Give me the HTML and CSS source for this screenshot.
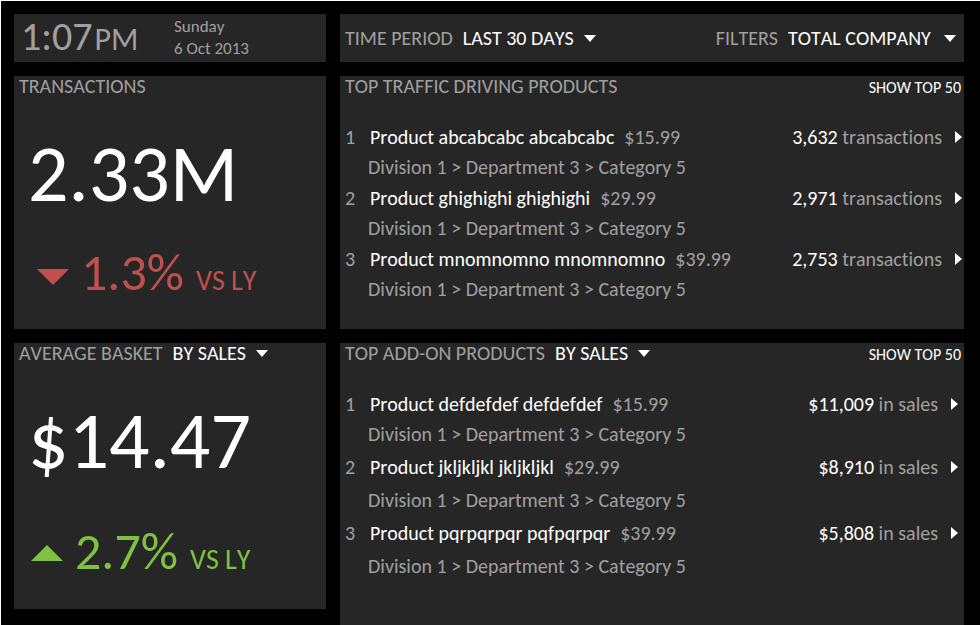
FILE: index.html
```html
<!DOCTYPE html>
<html lang="en">
<head>
<meta charset="utf-8">
<meta name="viewport" content="width=device-width, initial-scale=1">
<title>Retail dashboard</title>
<link rel="stylesheet" href="styles.css">
</head>
<body>
<main class="dashboard">
  <div class="column column-side">
    <header class="panel bar">
      <time class="clock">1:07<span class="meridiem">PM</span></time>
      <div class="date">Sunday<br>6 Oct 2013</div>
    </header>

    <section class="panel metric metric-transactions">
      <h2 class="title">TRANSACTIONS</h2>
      <p class="figure">2.33M</p>
      <p class="change change-down">
        <svg class="trend" viewBox="0 0 32 16" aria-hidden="true"><path d="M0 0H32L16 16Z"/></svg>
        <span class="percent">1.3%</span>
        <span class="versus">VS LY</span>
      </p>
    </section>

    <section class="panel metric metric-basket">
      <div class="heading">
        <label class="title" for="basket-by">AVERAGE BASKET</label>
        <span class="picker">
          <select id="basket-by"><option>BY SALES</option></select>
          <svg class="caret" viewBox="0 0 12 7" aria-hidden="true"><path d="M0 0H12L6 7Z"/></svg>
        </span>
      </div>
      <p class="figure">$14.47</p>
      <p class="change change-up">
        <svg class="trend" viewBox="0 0 32 16" aria-hidden="true"><path d="M0 16H32L16 0Z"/></svg>
        <span class="percent">2.7%</span>
        <span class="versus">VS LY</span>
      </p>
    </section>
  </div>

  <div class="column column-main">
    <div class="panel bar bar-filters">
      <div class="heading">
        <label class="title" for="period">TIME PERIOD</label>
        <span class="picker">
          <select id="period"><option>LAST 30 DAYS</option></select>
          <svg class="caret" viewBox="0 0 12 7" aria-hidden="true"><path d="M0 0H12L6 7Z"/></svg>
        </span>
      </div>
      <div class="heading">
        <label class="title" for="filter">FILTERS</label>
        <span class="picker picker-wide">
          <select id="filter"><option>TOTAL COMPANY</option></select>
          <svg class="caret" viewBox="0 0 12 7" aria-hidden="true"><path d="M0 0H12L6 7Z"/></svg>
        </span>
      </div>
    </div>

    <section class="panel ranking ranking-traffic">
      <div class="panel-head">
        <h2 class="title">TOP TRAFFIC DRIVING PRODUCTS</h2>
        <button class="show-top" type="button">SHOW TOP 50</button>
      </div>
      <ol class="products">
        <li class="product">
          <div class="line"><span class="rank">1</span><span class="name">Product abcabcabc abcabcabc</span><span class="price">$15.99</span><span class="result"><b>3,632</b> transactions</span><button class="open" type="button" aria-label="Open product 1"><svg viewBox="0 0 7 12"><path d="M0 0L7 6L0 12Z"/></svg></button></div>
          <div class="path">Division 1 &gt; Department 3 &gt; Category 5</div>
        </li>
        <li class="product">
          <div class="line"><span class="rank">2</span><span class="name">Product ghighighi ghighighi</span><span class="price">$29.99</span><span class="result"><b>2,971</b> transactions</span><button class="open" type="button" aria-label="Open product 2"><svg viewBox="0 0 7 12"><path d="M0 0L7 6L0 12Z"/></svg></button></div>
          <div class="path">Division 1 &gt; Department 3 &gt; Category 5</div>
        </li>
        <li class="product">
          <div class="line"><span class="rank">3</span><span class="name">Product mnomnomno mnomnomno</span><span class="price">$39.99</span><span class="result"><b>2,753</b> transactions</span><button class="open" type="button" aria-label="Open product 3"><svg viewBox="0 0 7 12"><path d="M0 0L7 6L0 12Z"/></svg></button></div>
          <div class="path">Division 1 &gt; Department 3 &gt; Category 5</div>
        </li>
      </ol>
    </section>

    <section class="panel ranking ranking-addon">
      <div class="panel-head">
        <div class="heading">
          <label class="title" for="addon-by">TOP ADD-ON PRODUCTS</label>
          <span class="picker">
            <select id="addon-by"><option>BY SALES</option></select>
            <svg class="caret" viewBox="0 0 12 7" aria-hidden="true"><path d="M0 0H12L6 7Z"/></svg>
          </span>
        </div>
        <button class="show-top" type="button">SHOW TOP 50</button>
      </div>
      <ol class="products">
        <li class="product">
          <div class="line"><span class="rank">1</span><span class="name">Product defdefdef defdefdef</span><span class="price">$15.99</span><span class="result"><b>$11,009</b> in sales</span><button class="open" type="button" aria-label="Open product 1"><svg viewBox="0 0 7 12"><path d="M0 0L7 6L0 12Z"/></svg></button></div>
          <div class="path">Division 1 &gt; Department 3 &gt; Category 5</div>
        </li>
        <li class="product">
          <div class="line"><span class="rank">2</span><span class="name">Product jkljkljkl jkljkljkl</span><span class="price">$29.99</span><span class="result"><b>$8,910</b> in sales</span><button class="open" type="button" aria-label="Open product 2"><svg viewBox="0 0 7 12"><path d="M0 0L7 6L0 12Z"/></svg></button></div>
          <div class="path">Division 1 &gt; Department 3 &gt; Category 5</div>
        </li>
        <li class="product">
          <div class="line"><span class="rank">3</span><span class="name">Product pqrpqrpqr pqfpqrpqr</span><span class="price">$39.99</span><span class="result"><b>$5,808</b> in sales</span><button class="open" type="button" aria-label="Open product 3"><svg viewBox="0 0 7 12"><path d="M0 0L7 6L0 12Z"/></svg></button></div>
          <div class="path">Division 1 &gt; Department 3 &gt; Category 5</div>
        </li>
      </ol>
    </section>
  </div>
</main>
</body>
</html>
```
FILE: styles.css
```css
* {
  box-sizing: border-box;
}

body {
  margin: 0;
  background: #000;
  color: #a0a0a0;
  font-family: Calibri, Carlito, Lato, sans-serif;
  font-size: 20px;
  font-kerning: none;
  font-variant-ligatures: none;
  line-height: 20px;
}

h2, p, ol {
  margin: 0;
  padding: 0;
}

select, button {
  appearance: none;
  margin: 0;
  padding: 0;
  border: 0;
  background: none;
  color: #fff;
  font: inherit;
  font-kerning: none;
  font-variant-ligatures: none;
  cursor: pointer;
}

.dashboard {
  display: grid;
  grid-template-columns: minmax(0, 1fr) minmax(0, 2fr);
  gap: 14px;
  min-height: 100vh;
  padding: 13px 16px 0 13px;
  border-top: 1px solid #fff;
  border-left: 1px solid #fff;
}

.column {
  display: flex;
  flex-direction: column;
  gap: 14px;
}

.column-side {
  padding-bottom: 16px;
}

.panel {
  background: #262626;
}

.bar {
  display: flex;
  align-items: center;
  height: 48px;
}

.bar-filters {
  justify-content: space-between;
  padding: 0 8px 0 5px;
}

.clock {
  padding-left: 7px;
  width: 160px;
  font-size: 40px;
  line-height: 48px;
}

.meridiem {
  padding-left: 2px;
  font-size: 32px;
}

.date {
  font-size: 17px;
  line-height: 22px;
}

.title {
  font-size: 20px;
  font-weight: 400;
  line-height: 20px;
}

.heading {
  display: flex;
  align-items: center;
  gap: 10px;
}

.picker {
  display: grid;
  align-items: center;
}

.picker select,
.picker .caret {
  grid-area: 1 / 1;
}

.picker select {
  padding-right: 21px;
  line-height: 20px;
}

.picker-wide select {
  padding-right: 25px;
}

.caret {
  justify-self: end;
  width: 12px;
  height: 7px;
  fill: #fff;
  pointer-events: none;
}

.metric {
  padding: 0 5px;
}

.metric-transactions {
  height: 253px;
}

.metric-basket {
  flex: 1;
}

.figure {
  padding: 38px 0 0 9px;
  color: #fff;
  font-size: 80px;
  line-height: 80px;
}

.change {
  display: flex;
  align-items: baseline;
  gap: 12px;
  padding: 28px 0 0 18px;
  line-height: 60px;
}

.metric-basket .change {
  padding: 40px 0 0 12px;
}

.change-down {
  color: #c0504d;
}

.change-up {
  color: #7fc241;
}

.trend {
  align-self: center;
  width: 32px;
  height: 16px;
  fill: currentColor;
}

.change-up .trend {
  margin-bottom: 6px;
}

.percent {
  font-size: 52px;
}

.versus {
  font-size: 28px;
}

.ranking-traffic {
  height: 253px;
}

.ranking-addon {
  flex: 1;
}

.panel-head {
  display: flex;
  align-items: flex-start;
  justify-content: space-between;
  padding: 0 3px 0 5px;
}

.show-top {
  font-size: 16px;
  line-height: 24px;
}

.products {
  display: flex;
  flex-direction: column;
  gap: 1px;
  padding: 22px 2px 0 5px;
  list-style: none;
}

.ranking-addon .products {
  gap: 3px;
  padding-right: 6px;
}

.product {
  display: flex;
  flex-direction: column;
  line-height: 30px;
}

.ranking-addon .product + .product {
  gap: 3px;
}

.line {
  display: flex;
  align-items: center;
}

.rank {
  width: 25px;
}

.name {
  color: #fff;
}

.price {
  padding-left: 10px;
}

.result {
  margin-left: auto;
}

.result b {
  color: #fff;
  font-weight: 400;
}

.open {
  display: flex;
  margin-left: 13px;
}

.open svg {
  width: 7px;
  height: 12px;
  fill: #fff;
}

.path {
  padding-left: 23px;
}
```
